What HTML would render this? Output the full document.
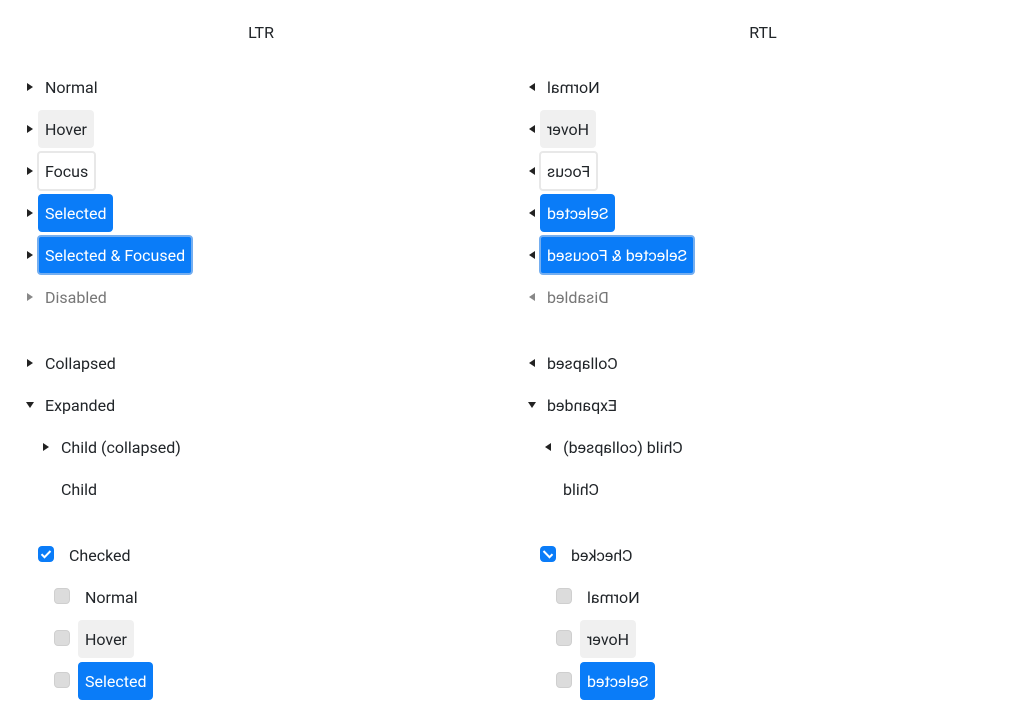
<!DOCTYPE html>
<html><head><meta charset="utf-8"><style>
body{margin:0;width:1024px;height:724px;background:#fff;font-family:"Roboto","Liberation Sans",sans-serif;color:#212529;position:relative;overflow:hidden}
.col{position:absolute;top:0;width:502px;height:724px}
.title{position:absolute;top:23px;width:100%;text-align:center;font-size:16px;line-height:20px;left:10px}
.it{position:absolute;height:38px;line-height:38px;padding:0 7px;border-radius:4px;font-size:16px;white-space:nowrap;box-sizing:border-box}
.it span{display:inline-block;position:relative;top:1px}
.rtl .it span{transform:scaleX(-1)}
.hov{background:#f0f0f0}
.foc{border:2px solid #e8e8e8;padding:0 6px;line-height:34px}
.sel{background:#0a7cf8;color:#fff}
.sf{background:#0a7cf8;color:#fff;border:2px solid #74aef0;padding:0 6px;line-height:34px}
.dis{color:#777}
.ar{position:absolute;width:0;height:0;border-top:4px solid transparent;border-bottom:4px solid transparent;border-left:6px solid #222}
.rtl .ar{border-left:none;border-right:6px solid #222}
.ar.down{border-left:4px solid transparent!important;border-right:4px solid transparent!important;border-top:6px solid #222;border-bottom:none}
.ar.d{border-left-color:#888}
.rtl .ar.d{border-right-color:#888}
.cb{position:absolute;width:16px;height:16px;border-radius:4px;box-sizing:border-box;background:#dcdcdc;border:1px solid #cfcfcf}
.cb.on{background:#0a7cf8;border:none}
.rtl .cb.on svg{transform:scaleX(-1)}
</style></head><body>

<div class="col" style="left:0">
<div class="title">LTR</div>
<div class="ar" style="left:27px;top:83px"></div><div class="it" style="left:38px;top:68px"><span>Normal</span></div>
<div class="ar" style="left:27px;top:125px"></div><div class="it hov" style="left:38px;top:110px"><span>Hover</span></div>
<div class="ar" style="left:27px;top:167px"></div><div class="it foc" style="left:37px;top:151px;height:40px;line-height:36px"><span>Focus</span></div>
<div class="ar" style="left:27px;top:209px"></div><div class="it sel" style="left:38px;top:194px"><span>Selected</span></div>
<div class="ar" style="left:27px;top:251px"></div><div class="it sf" style="left:37px;top:235px;height:40px;line-height:36px"><span>Selected &amp; Focused</span></div>
<div class="ar d" style="left:27px;top:293px"></div><div class="it dis" style="left:38px;top:278px"><span>Disabled</span></div>
<div class="ar" style="left:27px;top:359px"></div><div class="it" style="left:38px;top:344px"><span>Collapsed</span></div>
<div class="ar down" style="left:26px;top:402px"></div><div class="it" style="left:38px;top:386px"><span>Expanded</span></div>
<div class="ar" style="left:43px;top:443px"></div><div class="it" style="left:54px;top:428px"><span>Child (collapsed)</span></div>
<div class="it" style="left:54px;top:470px"><span>Child</span></div>
<div class="cb on" style="left:38px;top:546px"><svg width="16" height="16" viewBox="0 0 16 16"><path d="M3.5 8.2l3 3 6-6.2" stroke="#fff" stroke-width="2" fill="none"/></svg></div>
<div class="it" style="left:62px;top:536px"><span>Checked</span></div>
<div class="cb" style="left:54px;top:588px"></div><div class="it" style="left:78px;top:578px"><span>Normal</span></div>
<div class="cb" style="left:54px;top:630px"></div><div class="it hov" style="left:78px;top:620px"><span>Hover</span></div>
<div class="cb" style="left:54px;top:672px"></div><div class="it sel" style="left:78px;top:662px"><span>Selected</span></div>
</div>

<div class="col rtl" style="left:502px">
<div class="title">RTL</div>
<div class="ar" style="left:27px;top:83px"></div><div class="it" style="left:38px;top:68px"><span>Normal</span></div>
<div class="ar" style="left:27px;top:125px"></div><div class="it hov" style="left:38px;top:110px"><span>Hover</span></div>
<div class="ar" style="left:27px;top:167px"></div><div class="it foc" style="left:37px;top:151px;height:40px;line-height:36px"><span>Focus</span></div>
<div class="ar" style="left:27px;top:209px"></div><div class="it sel" style="left:38px;top:194px"><span>Selected</span></div>
<div class="ar" style="left:27px;top:251px"></div><div class="it sf" style="left:37px;top:235px;height:40px;line-height:36px"><span>Selected &amp; Focused</span></div>
<div class="ar d" style="left:27px;top:293px"></div><div class="it dis" style="left:38px;top:278px"><span>Disabled</span></div>
<div class="ar" style="left:27px;top:359px"></div><div class="it" style="left:38px;top:344px"><span>Collapsed</span></div>
<div class="ar down" style="left:26px;top:402px"></div><div class="it" style="left:38px;top:386px"><span>Expanded</span></div>
<div class="ar" style="left:43px;top:443px"></div><div class="it" style="left:54px;top:428px"><span>Child (collapsed)</span></div>
<div class="it" style="left:54px;top:470px"><span>Child</span></div>
<div class="cb on" style="left:38px;top:546px"><svg width="16" height="16" viewBox="0 0 16 16"><path d="M3.5 8.2l3 3 6-6.2" stroke="#fff" stroke-width="2" fill="none"/></svg></div>
<div class="it" style="left:62px;top:536px"><span>Checked</span></div>
<div class="cb" style="left:54px;top:588px"></div><div class="it" style="left:78px;top:578px"><span>Normal</span></div>
<div class="cb" style="left:54px;top:630px"></div><div class="it hov" style="left:78px;top:620px"><span>Hover</span></div>
<div class="cb" style="left:54px;top:672px"></div><div class="it sel" style="left:78px;top:662px"><span>Selected</span></div>
</div>
</body></html>
